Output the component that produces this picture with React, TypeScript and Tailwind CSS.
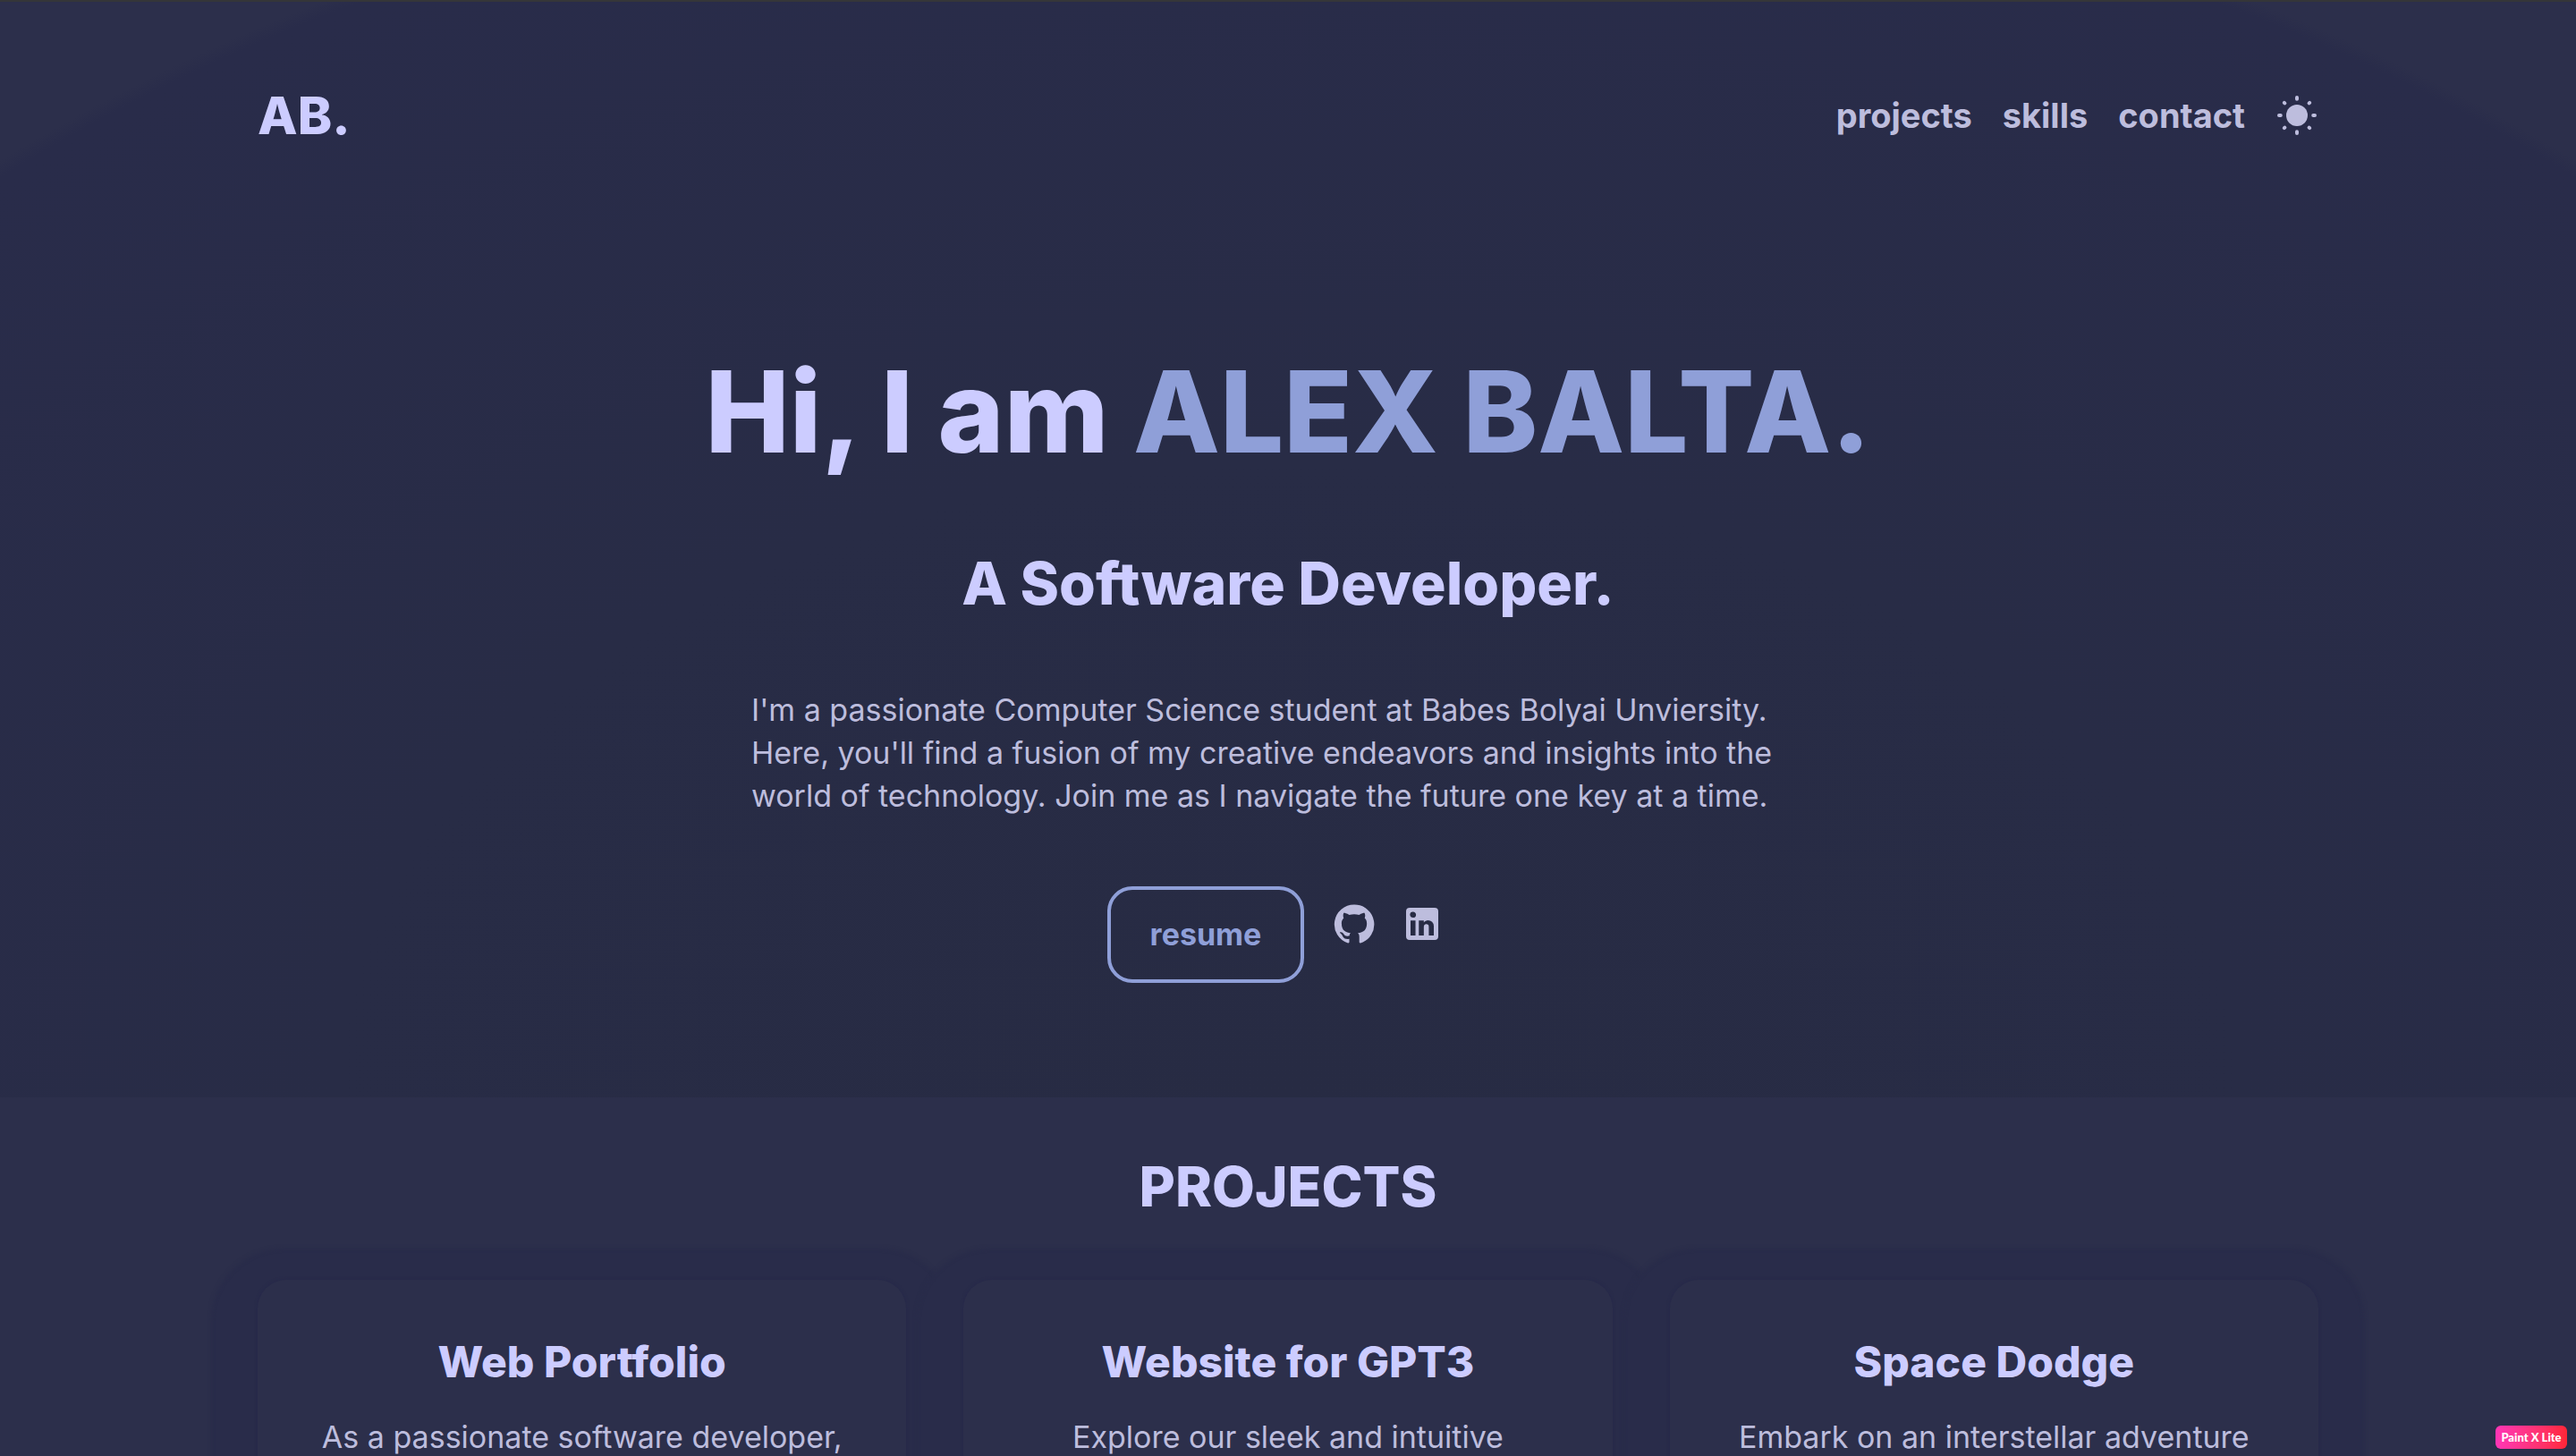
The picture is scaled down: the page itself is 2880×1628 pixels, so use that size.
import React from "react";

const navLinks = ["projects", "skills", "contact"];

const projects = [
  { title: "Web Portfolio", text: "As a passionate software developer," },
  { title: "Website for GPT3", text: "Explore our sleek and intuitive" },
  { title: "Space Dodge", text: "Embark on an interstellar adventure" },
];

function SunIcon() {
  return (
    <svg viewBox="0 0 24 24" className="size-12" fill="none" stroke="currentColor" strokeWidth="2" strokeLinecap="round" aria-hidden="true">
      <circle cx="12" cy="12" r="6" fill="currentColor" stroke="none" />
      <path d="M12 2v.9M12 21.1v.9M2 12h.9M21.1 12h.9M4.9 4.9l.3.3M18.8 18.8l.3.3M4.9 19.1l.3-.3M18.8 5.2l.3-.3" />
    </svg>
  );
}

function GitHubIcon() {
  return (
    <svg viewBox="0 0 24 24" className="size-12" fill="currentColor" aria-hidden="true">
      <path d="M12 1.27a11 11 0 00-3.48 21.46c.55.09.73-.28.73-.55v-1.84c-3.03.64-3.67-1.46-3.67-1.46-.55-1.29-1.28-1.65-1.28-1.65-.92-.65.1-.65.1-.65 1.1 0 1.73 1.1 1.73 1.1.92 1.65 2.57 1.2 3.21.92a2 2 0 01.64-1.47c-2.47-.27-5.04-1.19-5.04-5.5 0-1.1.46-2.1 1.2-2.84a3.76 3.76 0 010-2.93s.91-.28 3.11 1.1c1.8-.49 3.7-.49 5.5 0 2.1-1.38 3.02-1.1 3.02-1.1a3.76 3.76 0 01.1 2.93c.83.74 1.2 1.74 1.2 2.94 0 4.21-2.57 5.13-5.04 5.4.45.37.82.92.82 2.02v3.03c0 .27.1.64.73.55A11 11 0 0012 1.27" />
    </svg>
  );
}

function LinkedInIcon() {
  return (
    <svg viewBox="0 0 24 24" className="size-12" fill="currentColor" aria-hidden="true">
      <path d="M19 3a2 2 0 0 1 2 2v14a2 2 0 0 1-2 2H5a2 2 0 0 1-2-2V5a2 2 0 0 1 2-2h14m-.5 15.5v-5.3a3.26 3.26 0 0 0-3.26-3.26c-.85 0-1.84.52-2.32 1.3v-1.11h-2.79v8.37h2.79v-4.93c0-.77.62-1.4 1.39-1.4a1.4 1.4 0 0 1 1.4 1.4v4.93h2.79M6.88 8.56a1.68 1.68 0 0 0 1.68-1.68c0-.93-.75-1.69-1.68-1.69a1.69 1.69 0 0 0-1.69 1.69c0 .93.76 1.68 1.69 1.68m1.39 9.94v-8.37H5.5v8.37h2.77z" />
    </svg>
  );
}

function Header() {
  return (
    <header className="flex h-[254px] items-center justify-between">
      <h3 className="text-[58px] leading-[72px] font-extrabold text-[#ccccff]">
        <a href="#home">AB.</a>
      </h3>
      <nav className="flex items-center gap-[34px]">
        {navLinks.map((label) => (
          <a key={label} href={`#${label}`} className="text-[38px] leading-[48px] font-bold">
            {label}
          </a>
        ))}
        <button type="button" aria-label="Toggle theme">
          <SunIcon />
        </button>
      </nav>
    </header>
  );
}

function Hero() {
  return (
    <section id="about" className="flex flex-col items-center pt-[108px] pb-32">
      <h1 className="text-center text-[126px] leading-[192px] font-extrabold text-[#ccccff]">
        Hi, I am <span className="text-[#8f9fd8]">ALEX BALTA.</span>
      </h1>
      <h2 className="mt-12 text-center text-[66px] leading-[96px] font-extrabold text-[#ccccff]">
        A Software Developer.
      </h2>
      <p className="mt-[70px] w-[1200px] text-[34px] leading-[48px]">
        I'm a passionate Computer Science student at Babes Bolyai Unviersity.
        <br />
        Here, you'll find a fusion of my creative endeavors and insights into the
        <br />
        world of technology. Join me as I navigate the future one key at a time.
      </p>
      <div className="mt-[77px] flex">
        <a
          href="#resume"
          className="mr-8 rounded-[28px] border-4 border-[#8f9fd8] px-11 py-[26px] text-[34px] leading-[48px] font-bold text-[#8f9fd8]"
        >
          resume
        </a>
        <a href="#github" aria-label="GitHub" className="mt-[18px] mr-7">
          <GitHubIcon />
        </a>
        <a href="#linkedin" aria-label="LinkedIn" className="mt-[18px] mr-7">
          <LinkedInIcon />
        </a>
      </div>
    </section>
  );
}

function Projects() {
  return (
    <section id="projects" className="mx-auto w-4/5 pt-[52px]">
      <h2 className="text-center text-[62px] leading-[96px] font-extrabold text-[#ccccff]">PROJECTS</h2>
      <div className="mt-14 grid grid-cols-3 gap-16">
        {projects.map(({ title, text }) => (
          <article
            key={title}
            className="rounded-[32px] bg-[#2c2f4b] px-12 pt-14 pb-16 text-center shadow-[0_0_3px_1px_#27294a,0_17px_4px_52px_#292c4a]"
          >
            <h3 className="text-[48px] leading-[72px] font-extrabold text-[#ccccff]">{title}</h3>
            <p className="mt-6 text-[34px] leading-[48px]">{text}</p>
          </article>
        ))}
      </div>
    </section>
  );
}

export default function App() {
  return (
    <div className="relative h-screen overflow-hidden border-t-2 border-[#353639] bg-[#2c2f4b] font-['Inter',sans-serif] text-[#bdbddd]">
      <div className="bg-[radial-gradient(74%_116%_at_50%_100%,#272b43_0%,#282c46_50%,#292c4a_99%,#2c2f4b_100%)]">
        <div className="mx-auto w-4/5">
          <Header />
          <Hero />
        </div>
      </div>
      <Projects />
      <div className="absolute right-2.5 bottom-2 flex h-[26px] w-20 items-center justify-center rounded-md bg-linear-to-r from-[#ff35b5] to-[#ff2635] font-['Lato',sans-serif] text-[13px] leading-4 font-black text-white">
        Paint X Lite
      </div>
    </div>
  );
}
